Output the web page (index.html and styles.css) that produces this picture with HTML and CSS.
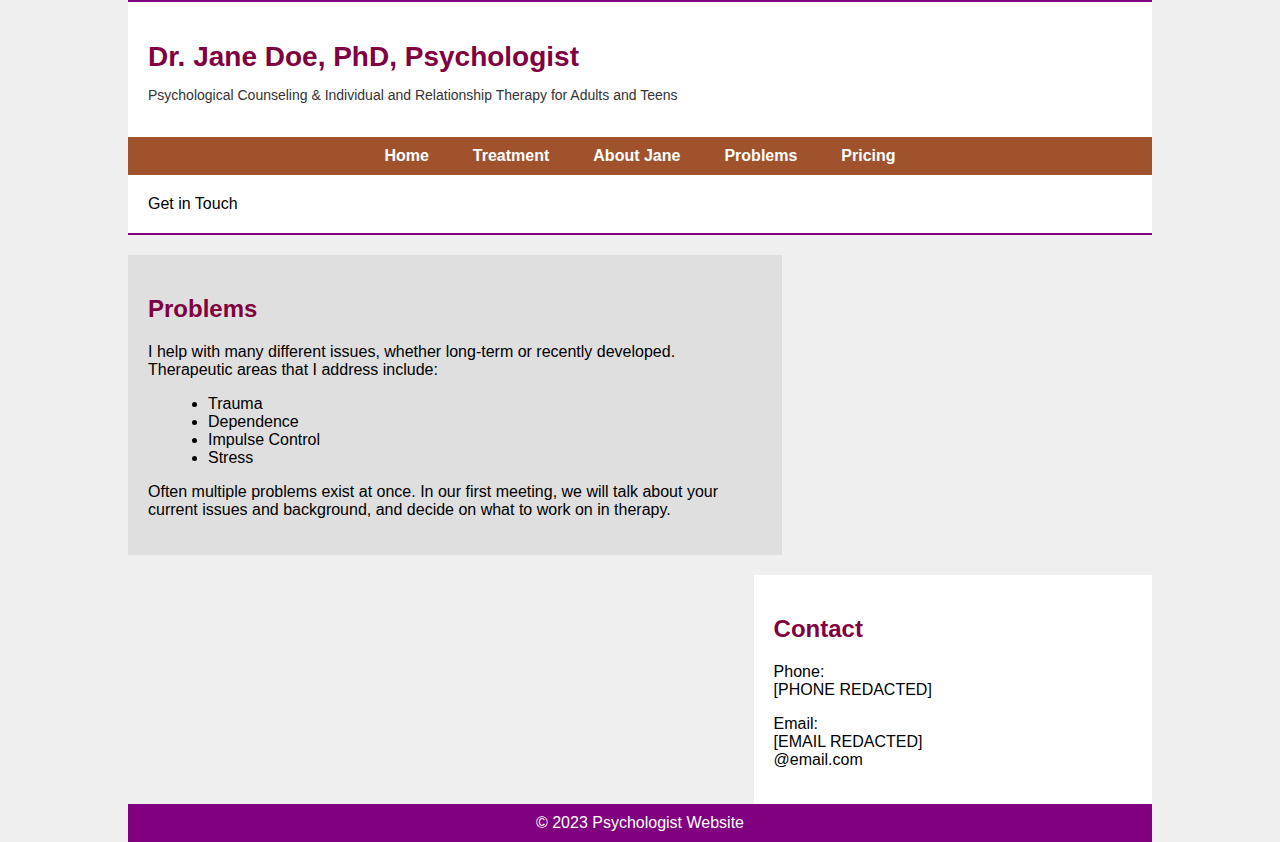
FILE: index.html
```html
<!DOCTYPE html>
<html lang="en">
<head>
<meta charset="utf-8">
<title>Dr. Jane Doe, PhD, Psychologist</title>
<link rel="stylesheet" href="styles.css">
</head>
<body>
<div class="page">
  <header class="site-header">
    <div class="brand">
      <h1 class="title">Dr. Jane Doe, PhD, Psychologist</h1>
      <p class="tagline">Psychological Counseling &amp; Individual and Relationship Therapy for Adults and Teens</p>
    </div>
    <nav class="nav">
      <a href="#">Home</a>
      <a href="#">Treatment</a>
      <a href="#">About Jane</a>
      <a href="#">Problems</a>
      <a href="#">Pricing</a>
    </nav>
    <div class="touch">Get in Touch</div>
  </header>
  <main class="content">
    <section class="problems">
      <h2>Problems</h2>
      <p>I help with many different issues, whether long-term or recently developed. Therapeutic areas that I address include:</p>
      <ul>
        <li>Trauma</li>
        <li>Dependence</li>
        <li>Impulse Control</li>
        <li>Stress</li>
      </ul>
      <p>Often multiple problems exist at once. In our first meeting, we will talk about your current issues and background, and decide on what to work on in therapy.</p>
    </section>
    <aside class="contact">
      <h2>Contact</h2>
      <p>Phone:<br>[PHONE REDACTED]</p>
      <p>Email:<br>[EMAIL REDACTED]<br>@email.com</p>
    </aside>
  </main>
  <footer class="footer">© 2023 Psychologist Website</footer>
</div>
</body>
</html>
```
FILE: styles.css
```css
html, body {
  margin: 0;
  padding: 0;
}
body {
  background: #efefef;
  font-family: "Liberation Sans", Arial, sans-serif;
  font-size: 16px;
  line-height: 18px;
  color: #000;
}
.page {
  width: 1024px;
  margin: 0 auto;
}
.site-header {
  background: #fff;
  border-top: 2px solid #800080;
  border-bottom: 2px solid #800080;
}
.brand {
  padding: 20px 20px 34px;
}
.title {
  margin: 19px 0 0;
  font-size: 28px;
  line-height: 32px;
  color: #800040;
}
.tagline {
  margin: 14px 0 0;
  font-size: 14px;
  line-height: 16px;
  color: #333;
}
.nav {
  background: #a0522d;
  height: 38px;
  display: flex;
  justify-content: center;
  align-items: center;
  gap: 44px;
}
.nav a {
  color: #fff;
  font-weight: bold;
  text-decoration: none;
}
.touch {
  padding: 20px;
}
.content {
  display: flex;
  flex-direction: column;
}
.problems {
  width: 60%;
  padding: 20px;
  margin-top: 20px;
  background: #dfdfdf;
}
.contact {
  width: 35%;
  padding: 20px;
  margin-top: 20px;
  background: #fff;
  align-self: flex-end;
}
.problems > *:first-child,
.contact > *:first-child { margin-top: 20px; }
.problems > *:last-child { margin-bottom: 16px; }
.contact > *:last-child { margin-bottom: 15px; }
h2 {
  font-size: 24px;
  line-height: 28px;
  color: #800040;
  margin: 20px 0;
}
p {
  margin: 16px 0;
}
ul {
  margin: 16px 0;
  padding-left: 60px;
}
.footer {
  background: #800080;
  color: #fff;
  text-align: center;
  padding: 10px;
}
```
